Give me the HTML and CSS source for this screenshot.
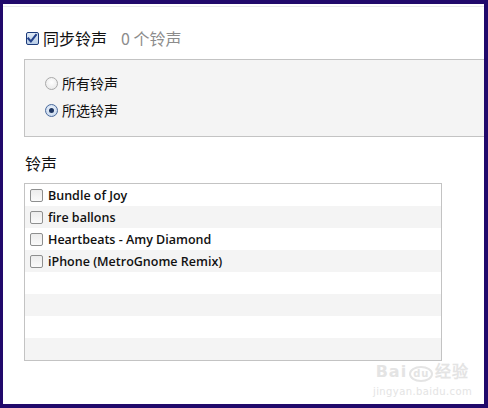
FILE: index.html
```html
<!DOCTYPE html>
<html lang="zh-CN">
<head>
    <meta charset="UTF-8">
    <title>同步铃声</title>
    <link rel="stylesheet" href="styles.css">
</head>
<body>
    <div class="frame">
        <div class="topline"></div>

        <!-- 同步开关 -->
        <div class="sync-row">
            <span class="check checked">
                <svg width="13" height="13" viewBox="0 0 13 13"><path d="M2.5 6.5 L5.3 9.6 L10.8 2.6" fill="none" stroke="#23418a" stroke-width="2.2" stroke-linecap="square"/></svg>
            </span>
            <span class="sync-label">同步铃声</span>
            <span class="sync-count">0 个铃声</span>
        </div>

        <!-- 选项区域 -->
        <div class="options">
            <label class="option"><span class="radio"></span>所有铃声</label>
            <label class="option"><span class="radio selected"></span>所选铃声</label>
        </div>

        <h2 class="section-title">铃声</h2>

        <!-- 铃声列表 -->
        <ul class="tone-list">
            <li><span class="check"></span>Bundle of Joy</li>
            <li><span class="check"></span>fire ballons</li>
            <li><span class="check"></span>Heartbeats - Amy Diamond</li>
            <li><span class="check"></span>iPhone (MetroGnome Remix)</li>
            <li></li>
            <li></li>
            <li></li>
            <li></li>
        </ul>

        <!-- 水印 -->
        <div class="watermark">
            <div class="wm-logo">Bai<span class="wm-du">du</span>经验</div>
            <div class="wm-url">jingyan.baidu.com</div>
        </div>
    </div>
</body>
</html>
```

FILE: styles.css
```css
/* Temel ayarlar */
html, body {
    margin: 0;
    padding: 0;
    width: 488px;
    height: 408px;
    overflow: hidden;
    background: #21096b;
}

.frame {
    position: relative;
    box-sizing: border-box;
    width: 488px;
    height: 408px;
    border-style: solid;
    border-color: #21096b;
    border-width: 4px 4px 4px 3px;
    background: #fff;
    overflow: hidden;
    font-family: "Noto Sans CJK SC", sans-serif;
    color: #111;
}

.topline {
    margin-top: 2px;
    height: 1px;
    background: #ececec;
}

/* Senkron satırı */
.sync-row {
    display: flex;
    align-items: center;
    height: 20px;
    line-height: 20px;
    margin: 21px 0 0 23px;
    font-size: 16px;
}

.check {
    box-sizing: border-box;
    display: inline-flex;
    width: 13px;
    height: 13px;
    border: 1px solid #8e8f8f;
    border-radius: 2px;
    background: linear-gradient(#ececec, #fafafa);
    flex-shrink: 0;
}

.check svg {
    margin: -1px 0 0 -1px;
}

.check.checked {
    border-color: #1c3a7a;
    background: linear-gradient(#dfe9f5, #b8cde6);
}

.sync-label {
    margin-left: 4px;
}

.sync-count {
    margin-left: 14px;
    color: #8c8c8c;
}

/* Seçenek kutusu */
.options {
    margin: 11px -2px 0 21px;
    height: 78px;
    box-sizing: border-box;
    padding-top: 10px;
    background: #f4f4f4;
    border-top: 1px solid #c3c3c3;
    border-bottom: 1px solid #c3c3c3;
    border-left: 1px solid #c3c3c3;
}

.option {
    display: flex;
    align-items: center;
    height: 27px;
    line-height: 27px;
    margin-left: 20px;
    font-size: 14px;
}

.radio {
    box-sizing: border-box;
    width: 13px;
    height: 13px;
    margin-right: 4px;
    border-radius: 50%;
    border: 1px solid #a9a9a9;
    background: radial-gradient(circle at 50% 40%, #fff, #e4e4e4);
    display: flex;
    align-items: center;
    justify-content: center;
}

.radio.selected {
    border-color: #4a6a9c;
    background: radial-gradient(circle at 50% 40%, #f1f6fc, #bcd0ea);
}

.radio.selected::after {
    content: "";
    width: 5px;
    height: 5px;
    border-radius: 50%;
    background: #1d3561;
}

.section-title {
    margin: 14px 0 0 22px;
    font-size: 16px;
    font-weight: normal;
    line-height: 24px;
    height: 24px;
}

/* Liste */
.tone-list {
    list-style: none;
    margin: 8px 0 0 21px;
    padding: 0;
    width: 418px;
    box-sizing: border-box;
    border: 1px solid #c3c3c3;
}

.tone-list li {
    display: flex;
    align-items: center;
    height: 22px;
    padding-left: 5px;
    font-family: "Open Sans", "Noto Sans CJK SC", sans-serif;
    font-size: 12.5px;
    font-weight: 600;
    color: #111;
}

.tone-list li:nth-child(even) {
    background: #f4f4f4;
}

.tone-list li .check {
    margin-right: 5px;
}

/* Filigran */
.watermark {
    position: absolute;
    left: 370px;
    top: 358px;
    color: #e4e4e4;
    text-align: center;
}

.wm-logo {
    font-family: "DejaVu Sans", sans-serif;
    font-size: 16px;
    font-weight: bold;
    letter-spacing: 1px;
    line-height: 20px;
}

.wm-du {
    display: inline-block;
    font-size: 10px;
    border: 2px solid #e4e4e4;
    border-radius: 50%;
    padding: 0 2px;
    line-height: 12px;
    margin: 0 2px;
}

.wm-url {
    font-family: "DejaVu Sans", sans-serif;
    font-size: 10px;
    letter-spacing: 0.4px;
    line-height: 14px;
    margin-top: 3px;
}
```
